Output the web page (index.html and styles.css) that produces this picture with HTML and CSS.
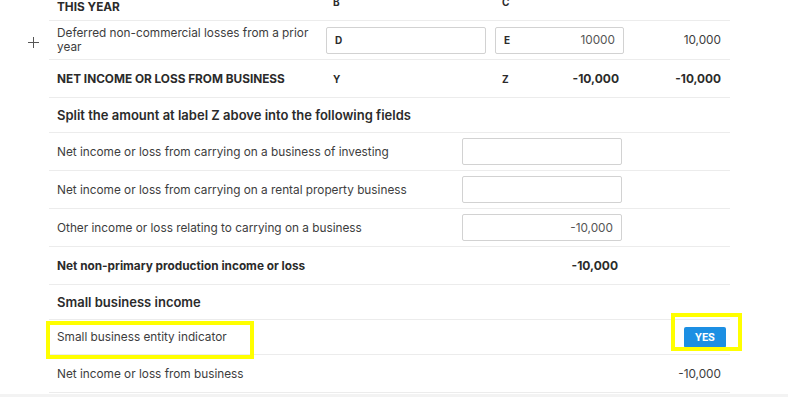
FILE: index.html
```html
<!DOCTYPE html>
<html lang="en">
<head>
  <meta charset="UTF-8">
  <meta name="viewport" content="width=device-width, initial-scale=1.0">
  <title>Business income</title>
  <link rel="stylesheet" href="styles.css">
</head>
<body>
  <div class="page">
    <div class="form">

      <div class="row">
        <div class="toggle"></div>
        <div class="cells cols-4 head-row">
          <div class="label caps bottom">THIS YEAR</div>
          <div class="code">B</div>
          <div class="code">C</div>
          <div></div>
        </div>
      </div>

      <div class="row tall">
        <div class="toggle"><span class="plus"></span></div>
        <div class="cells cols-4">
          <div class="label">Deferred non-commercial losses from a prior year</div>
          <div class="field"><span class="field-code">D</span></div>
          <div class="field"><span class="field-code">E</span><span class="field-value">10000</span></div>
          <div class="amount">10,000</div>
        </div>
      </div>

      <div class="row">
        <div class="toggle"></div>
        <div class="cells cols-4">
          <div class="label caps">NET INCOME OR LOSS FROM BUSINESS</div>
          <div class="code">Y</div>
          <div class="code code-split">
            <span>Z</span>
            <span class="total">-10,000</span>
          </div>
          <div class="amount strong">-10,000</div>
        </div>
      </div>

      <div class="row short">
        <div class="toggle"></div>
        <div class="cells">
          <div class="section-title">Split the amount at label Z above into the following fields</div>
        </div>
      </div>

      <div class="row">
        <div class="toggle"></div>
        <div class="cells cols-3">
          <div class="label">Net income or loss from carrying on a business of investing</div>
          <div class="field"></div>
        </div>
      </div>

      <div class="row">
        <div class="toggle"></div>
        <div class="cells cols-3">
          <div class="label">Net income or loss from carrying on a rental property business</div>
          <div class="field"></div>
        </div>
      </div>

      <div class="row">
        <div class="toggle"></div>
        <div class="cells cols-3">
          <div class="label">Other income or loss relating to carrying on a business</div>
          <div class="field"><span class="field-value">-10,000</span></div>
        </div>
      </div>

      <div class="row">
        <div class="toggle"></div>
        <div class="cells cols-3">
          <div class="label strong">Net non-primary production income or loss</div>
          <div class="total inset">-10,000</div>
        </div>
      </div>

      <div class="row short">
        <div class="toggle"></div>
        <div class="cells">
          <div class="section-title">Small business income</div>
        </div>
      </div>

      <div class="row short">
        <div class="toggle"></div>
        <div class="cells cols-4 marked">
          <div class="label">Small business entity indicator</div>
          <div></div>
          <div></div>
          <div class="answer">
            <button class="yes-btn">YES</button>
            <span class="highlight highlight-btn"></span>
          </div>
          <span class="highlight highlight-label"></span>
        </div>
      </div>

      <div class="row">
        <div class="toggle"></div>
        <div class="cells cols-4">
          <div class="label">Net income or loss from business</div>
          <div></div>
          <div></div>
          <div class="amount">-10,000</div>
        </div>
      </div>

    </div>
  </div>
</body>
</html>
```

FILE: styles.css
```css
* {
  box-sizing: border-box;
}

body {
  margin: 0;
  background: #f3f3f3;
  font-family: 'Inter', 'Noto Sans', sans-serif;
  font-size: 11.8px;
  color: #3d3d3d;
}

.page {
  background: #fff;
  margin-top: -17px;
  padding-left: 25px;
  padding-bottom: 1px;
}

.form {
  width: 705px;
}

.row {
  display: flex;
  min-height: 38px;
}

.row.tall {
  min-height: 39px;
}

.row.short {
  min-height: 35px;
}

.toggle {
  width: 24px;
  flex-shrink: 0;
  display: flex;
  align-items: center;
}

.plus {
  position: relative;
  width: 11px;
  height: 11px;
  margin-left: 3px;
  margin-top: 3px;
}

.plus::before,
.plus::after {
  content: '';
  position: absolute;
  background: #555;
}

.plus::before {
  left: 0;
  right: 0;
  top: 5px;
  height: 1px;
}

.plus::after {
  top: 0;
  bottom: 0;
  left: 5px;
  width: 1px;
}

.cells {
  flex: 1;
  border-bottom: 1px solid #ececec;
  display: flex;
  align-items: center;
  position: relative;
}

.cols-4 {
  display: grid;
  grid-template-columns: 268px 160px 129px 1fr;
  column-gap: 9px;
}

.cols-3 {
  display: grid;
  grid-template-columns: 404px 160px 1fr;
  column-gap: 9px;
}

.label {
  padding-left: 8px;
  line-height: 14px;
  padding-right: 3px;
}

.caps {
  font-size: 11.8px;
  font-weight: 700;
  color: #2b2b2b;
}

.bottom {
  align-self: end;
  padding-bottom: 6px;
}

.strong {
  font-weight: 700;
  color: #2b2b2b;
}

.code {
  font-size: 10px;
  font-weight: 700;
  color: #2b2b2b;
  padding-left: 7px;
}

.code-split {
  display: flex;
  justify-content: space-between;
  align-items: center;
  padding-right: 5px;
}

.total {
  font-size: 12px;
  font-weight: 700;
  color: #2b2b2b;
}

.inset {
  text-align: right;
  padding-right: 4px;
}

.field {
  height: 27px;
  border: 1px solid #d2d2d2;
  border-radius: 2px;
  display: flex;
  align-items: center;
  justify-content: space-between;
  padding: 0 8px;
}

.field-code {
  font-size: 10px;
  font-weight: 700;
  color: #2b2b2b;
}

.field-value {
  margin-left: auto;
  color: #555;
}

.amount {
  text-align: right;
  padding-right: 9px;
}

.section-title {
  padding-left: 8px;
  font-size: 13px;
  font-weight: 600;
  color: #2b2b2b;
}

.answer {
  position: relative;
  display: flex;
  justify-content: flex-end;
  padding-right: 4px;
}

.yes-btn {
  width: 42px;
  height: 21px;
  border: none;
  border-radius: 2px;
  background: #1c8fe3;
  color: #fff;
  font-family: 'Roboto', 'Inter', sans-serif;
  font-size: 11px;
  font-weight: 700;
  padding: 0;
}

.highlight {
  position: absolute;
  border: 4px solid #ffff00;
  pointer-events: none;
}

.highlight-label {
  left: -3px;
  top: 1px;
  width: 208px;
  height: 38px;
}

.highlight-btn {
  right: -12px;
  top: -14px;
  width: 71px;
  height: 38px;
}
```
